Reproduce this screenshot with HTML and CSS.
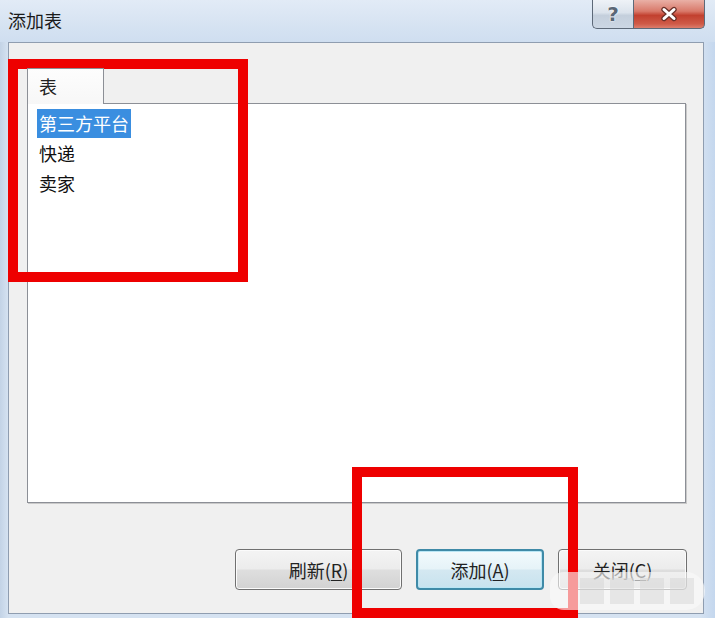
FILE: index.html
```html
<!DOCTYPE html>
<html lang="zh-CN">
<head>
<meta charset="utf-8">
<title>添加表</title>
<link rel="stylesheet" href="styles.css">
</head>
<body>
<div class="window">
  <div class="titlebar">
    <div class="title">添加表</div>
    <div class="caption">
      <div class="cap-btn help">
        <span class="qmark">?</span>
      </div>
      <div class="cap-btn close">
        <svg width="20" height="16" viewBox="0 0 20 16">
          <path d="M5 3.5 L15 12.5 M15 3.5 L5 12.5" stroke="#6a3028" stroke-width="5.4" stroke-linecap="round"/>
          <path d="M5 3.5 L15 12.5 M15 3.5 L5 12.5" stroke="#ffffff" stroke-width="3" stroke-linecap="round"/>
        </svg>
      </div>
    </div>
  </div>
  <div class="client">
    <div class="tabs">
      <div class="tabstrip">
        <div class="tab">表</div>
        <div class="tabrest"></div>
      </div>
      <div class="panel">
        <ul class="list">
          <li><span class="item selected">第三方平台</span></li>
          <li><span class="item">快递</span></li>
          <li><span class="item">卖家</span></li>
        </ul>
      </div>
    </div>
    <div class="buttons">
      <button class="btn wide">刷新(<u>R</u>)</button>
      <button class="btn default">添加(<u>A</u>)</button>
      <button class="btn">关闭(<u>C</u>)</button>
    </div>
  </div>
  <div class="mark mark-list"></div>
  <div class="mark mark-add"></div>
  <div class="watermark">
    <span class="wm-block"></span><span class="wm-block"></span><span class="wm-block"></span><span class="wm-block"></span>
  </div>
</div>
</body>
</html>
```
FILE: styles.css
```css
* { box-sizing: border-box; }
html, body { margin: 0; padding: 0; }
body {
  width: 715px;
  height: 618px;
  overflow: hidden;
  font-family: "Noto Sans CJK SC", "Liberation Sans", sans-serif;
  background: #c9d9ec;
}
.window {
  position: relative;
  width: 715px;
  height: 618px;
  display: flex;
  flex-direction: column;
  background: linear-gradient(90deg, #c3d3e6 0, #d5e2f1 8px, #d5e2f1 700px, #c4d7ee 100%);
}
.titlebar {
  height: 42px;
  display: flex;
  justify-content: space-between;
  align-items: flex-start;
  background: linear-gradient(180deg, #e2ebf6 0%, #d6e3f2 60%, #cfdef0 100%);
}
.title {
  padding-left: 8px;
  line-height: 40px;
  font-size: 18px;
  color: #1b1b1b;
}
.caption {
  display: flex;
  margin-right: 10px;
}
.cap-btn {
  height: 29px;
  display: flex;
  align-items: center;
  justify-content: center;
  border: 1px solid #5d6978;
  border-top: none;
}
.help {
  width: 41px;
  border-radius: 0 0 0 5px;
  border-right: none;
  background: linear-gradient(180deg, #eef2f7 0%, #dbe3ec 45%, #c4cfdc 55%, #ccd7e4 100%);
}
.qmark {
  font-family: "DejaVu Sans", sans-serif;
  font-weight: bold;
  font-size: 20px;
  color: #5b6776;
  text-shadow: 0 0 2px #ffffff, 0 0 1px #ffffff;
  line-height: 1;
}
.close {
  width: 72px;
  border-radius: 0 0 5px 0;
  background: linear-gradient(180deg, #e9b0a6 0%, #d9796a 40%, #c2402f 55%, #cf5a47 85%, #dc7d6c 100%);
}
.close svg { display: block; }
.client {
  margin: 0 11px 4px 8px;
  flex: 1;
  display: flex;
  flex-direction: column;
  padding: 25px 16px 0 18px;
  background: #f0f0f0;
  border: 1px solid #8f9db0;
}
.tabs {
  display: flex;
  flex-direction: column;
  width: 659px;
}
.tabstrip {
  display: flex;
  height: 35px;
}
.tab {
  width: 77px;
  padding-left: 11px;
  line-height: 35px;
  font-size: 18px;
  color: #222;
  background: linear-gradient(180deg, #fdfdfd 0%, #f7f7f7 100%);
  border: 1px solid #8c8f96;
  border-bottom: none;
  position: relative;
  z-index: 1;
  margin-bottom: -1px;
}
.tabrest {
  flex: 1;
}
.panel {
  height: 400px;
  background: #ffffff;
  border: 1px solid #8c8f96;
  box-shadow: 1px 1px 0 #c9c9c9;
}
.list {
  list-style: none;
  margin: 0;
  padding: 4px 0 0 9px;
}
.list li {
  height: 30px;
  display: flex;
  align-items: center;
}
.item {
  font-size: 18px;
  line-height: 29px;
  padding: 0 2px;
  color: #111;
}
.item.selected {
  background: #3a8ee0;
  color: #ffffff;
}
.buttons {
  margin-top: 46px;
  display: flex;
  justify-content: flex-end;
  gap: 14px;
}
.btn {
  width: 129px;
  height: 41px;
  font-family: "Noto Sans CJK SC", "Liberation Sans", sans-serif;
  font-size: 18px;
  color: #222;
  border: 1px solid #707070;
  border-radius: 4px;
  padding: 0;
  background: linear-gradient(180deg, #f4f4f4 0%, #ececec 48%, #dedede 52%, #d2d2d2 100%);
  box-shadow: inset 0 0 0 1px #fbfbfb;
}
.btn.wide { width: 167px; }
.btn.default {
  width: 128px;
  border: 2px solid #3f8aa7;
  background: linear-gradient(180deg, #f2fafd 0%, #e6f3f8 48%, #d4e8f1 52%, #c7e2ee 100%);
  box-shadow: inset 0 0 0 1px #b9e6f5;
}
.btn u { text-underline-offset: 2px; }
.mark {
  position: absolute;
  border: 10px solid #ee0000;
  pointer-events: none;
}
.mark-list {
  left: 8px;
  top: 59px;
  width: 240px;
  height: 223px;
}
.mark-add {
  left: 352px;
  top: 467px;
  width: 226px;
  height: 151px;
}
.watermark {
  position: absolute;
  left: 550px;
  top: 572px;
  width: 155px;
  height: 38px;
  border-radius: 14px 19px 19px 14px;
  background: rgba(250, 250, 250, 0.62);
  display: flex;
  align-items: center;
  gap: 6px;
  padding-left: 30px;
}
.wm-block {
  width: 24px;
  height: 26px;
  background: rgba(210, 210, 210, 0.45);
}
```
